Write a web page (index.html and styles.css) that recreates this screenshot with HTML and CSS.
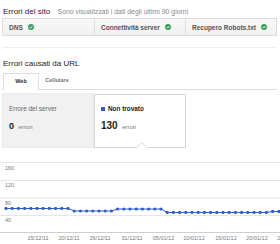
FILE: index.html
```html
<!DOCTYPE html>
<html lang="it">
<head>
<meta charset="utf-8">
<title>Errori di scansione</title>
<link rel="stylesheet" href="styles.css">
</head>
<body>
<div class="main">
  <div class="title-row">
    <span class="title">Errori del sito</span>
    <span class="subtitle">Sono visualizzati i dati degli ultimi 90 giorni</span>
  </div>
  <div class="status">
    <div class="cell">DNS <svg class="ok" viewBox="0 0 12 12"><circle cx="6" cy="6" r="6" fill="#3a9f5c"/><path d="M3.2 6.3l2 2 3.7-4.1" stroke="#fff" stroke-width="1.8" fill="none"/></svg></div>
    <div class="cell">Connettività server <svg class="ok" viewBox="0 0 12 12"><circle cx="6" cy="6" r="6" fill="#3a9f5c"/><path d="M3.2 6.3l2 2 3.7-4.1" stroke="#fff" stroke-width="1.8" fill="none"/></svg></div>
    <div class="cell">Recupero Robots.txt <svg class="ok" viewBox="0 0 12 12"><circle cx="6" cy="6" r="6" fill="#3a9f5c"/><path d="M3.2 6.3l2 2 3.7-4.1" stroke="#fff" stroke-width="1.8" fill="none"/></svg></div>
  </div>
  <div class="sep"></div>
  <h2 class="section">Errori causati da URL</h2>
  <div class="tabs">
    <div class="tab active">Web</div>
    <div class="tab">Cellulare</div>
  </div>
  <div class="cards">
    <div class="card">
      <div class="card-label">Errore del server</div>
      <div class="card-value"><b class="num small">0</b> <span class="unit">errori</span></div>
    </div>
    <div class="card selected">
      <div class="card-label strong"><span class="swatch"></span>Non trovato</div>
      <div class="card-value"><b class="num">130</b> <span class="unit">errori</span></div>
      <svg class="notch" viewBox="0 0 10 6"><rect x="0" y="0" width="10" height="6" fill="#fff"/><polyline points="0,5.5 5,0.8 10,5.5" fill="none" stroke="#d4d4d4" stroke-width="1"/></svg>
    </div>
  </div>
</div>
<svg class="chart" viewBox="0 0 280 94" width="280" height="94">
  <defs>
    <marker id="dot" markerWidth="4" markerHeight="4" refX="2" refY="2" markerUnits="userSpaceOnUse">
      <circle cx="2" cy="2" r="1.6" fill="#2f5fc4"/>
    </marker>
  </defs>
  <g stroke="#e6e6e6" stroke-width="1">
    <line x1="0" y1="12.5" x2="280" y2="12.5"/>
    <line x1="0" y1="30.5" x2="280" y2="30.5"/>
    <line x1="0" y1="48" x2="280" y2="48"/>
    <line x1="0" y1="65.5" x2="280" y2="65.5"/>
  </g>
  <line x1="0" y1="82.5" x2="280" y2="82.5" stroke="#cfcfcf" stroke-width="1"/>
  <g class="ylab">
    <text x="5" y="20">160</text>
    <text x="5" y="37.3">120</text>
    <text x="5" y="54.6">80</text>
    <text x="5" y="72">40</text>
  </g>
  <g class="xlab" text-anchor="middle">
    <text x="38" y="90">15/12/11</text>
    <text x="69" y="90">20/12/11</text>
    <text x="100" y="90">26/12/11</text>
    <text x="132" y="90">31/12/11</text>
    <text x="163.5" y="90">05/01/12</text>
    <text x="194" y="90">10/01/12</text>
    <text x="226" y="90">15/01/12</text>
    <text x="257" y="90">20/01/12</text>
    <text x="288" y="90">25/01/12</text>
  </g>
  <polyline fill="none" stroke="#2f5fc4" stroke-width="1" marker-start="url(#dot)" marker-mid="url(#dot)" marker-end="url(#dot)"
    points="6,58.5 12.2,58.5 18.4,58.5 24.6,58.5 30.8,58.5 37,58.5 43.2,58.5 49.4,58.5 55.6,58.5 61.8,58.5 68,58.5 74.2,61 80.4,61 86.6,61 92.8,61 99,61 105.2,61 111.4,61 117.6,59 123.8,59 130,59 136.2,59 142.4,59 148.6,59 154.8,59 161,59 167.2,62.5 173.4,62.5 179.6,62.5 185.8,62.5 192,62.5 198.2,62.5 204.4,62.5 210.6,62.5 216.8,62.5 223,62.5 229.2,62.5 235.4,62.5 241.6,62.5 247.8,62.5 254,62.5 260.2,62.5 266.4,62.5 272.6,61.5 278.8,61.5"/>
</svg>
</body>
</html>
```

FILE: styles.css
```css
* { box-sizing: border-box; }
html, body {
  margin: 0;
  padding: 0;
  background: #fff;
  width: 280px;
  height: 244px;
  overflow: hidden;
  font-family: "Liberation Sans", Arial, Helvetica, sans-serif;
  color: #222;
}
.main {
  padding: 0 3px 0 2px;
}
.title-row {
  margin-top: 4px;
  height: 10px;
  line-height: 10px;
  white-space: nowrap;
  padding-left: 1px;
}
.title {
  font-size: 8px;
  color: #222;
}
.subtitle {
  font-size: 6.9px;
  color: #888;
  margin-left: 3px;
}
.status {
  margin-top: 4px;
  height: 18px;
  display: grid;
  grid-template-columns: 1fr 1fr 1fr;
  border: 1px solid #dcdcdc;
  background: linear-gradient(#f8f8f8, #f1f1f1);
}
.cell {
  display: flex;
  align-items: center;
  gap: 5px;
  padding-left: 6px;
  font-size: 6.5px;
  font-weight: bold;
  color: #555;
  white-space: nowrap;
}
.cell + .cell {
  border-left: 1px solid #dcdcdc;
}
.ok {
  width: 6px;
  height: 6px;
  flex: none;
}
.sep {
  margin-top: 11px;
  height: 1px;
  background: #efefef;
}
.section {
  margin: 11px 0 0 0;
  padding-left: 1px;
  height: 10px;
  line-height: 10px;
  font-size: 8px;
  font-weight: normal;
  color: #222;
}
.tabs {
  margin-top: 4px;
  height: 17px;
  display: flex;
  border-bottom: 1px solid #dcdcdc;
  padding-left: 1px;
}
.tab {
  width: 36px;
  height: 16px;
  line-height: 15px;
  text-align: center;
  font-size: 5.6px;
  font-weight: bold;
  color: #777;
}
.tab.active {
  border: 1px solid #dcdcdc;
  border-bottom: none;
  background: #fff;
  color: #333;
  height: 17px;
}
.cards {
  margin-top: 3px;
  display: flex;
  height: 55px;
}
.card {
  position: relative;
  width: 92px;
  height: 55px;
  padding: 11px 6px 0 6px;
  background: #f1f1f1;
  border: 1px solid #ebebeb;
}
.card.selected {
  background: #fff;
  border: 1px solid #d4d4d4;
  margin-top: 1px;
  height: 54px;
  padding-top: 10px;
}
.card-label {
  height: 8px;
  line-height: 8px;
  font-size: 6.4px;
  color: #666;
  display: flex;
  align-items: center;
  white-space: nowrap;
}
.card-label.strong {
  font-weight: bold;
  color: #222;
}
.swatch {
  width: 4px;
  height: 4px;
  background: #2f5fc4;
  margin-right: 3px;
}
.card-value {
  margin-top: 5px;
  height: 11px;
  line-height: 11px;
  white-space: nowrap;
}
.num {
  font-size: 10px;
  color: #222;
}
.num.small {
  font-size: 9px;
}
.unit {
  font-size: 6px;
  color: #777;
}
.notch {
  position: absolute;
  left: 42px;
  bottom: -1px;
  width: 10px;
  height: 6px;
}
.chart {
  display: block;
  margin-top: 2px;
}
.ylab text, .xlab text {
  font-family: "Liberation Sans", Arial, sans-serif;
  font-size: 5.5px;
  fill: #777;
}
```
